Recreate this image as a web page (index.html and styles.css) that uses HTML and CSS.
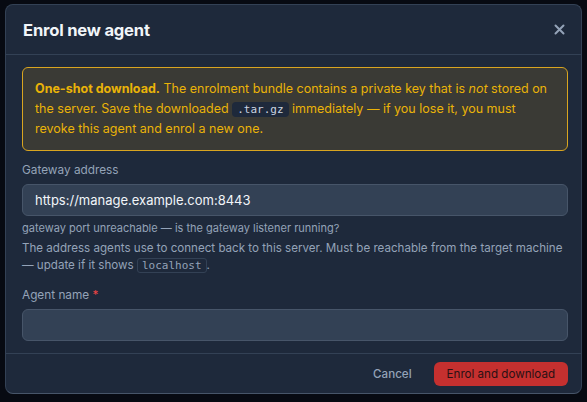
FILE: index.html
```html
<!DOCTYPE html>
<html lang="en">
<head>
<meta charset="utf-8">
<title>Enrol new agent</title>
<link rel="stylesheet" href="styles.css">
</head>
<body>
<div class="modal">
  <div class="modal-header">
    <h2 class="modal-title">Enrol new agent</h2>
    <button class="close-btn" aria-label="Close">
      <svg width="11" height="11" viewBox="0 0 11 11"><path d="M1.5 1.5 L9.5 9.5 M9.5 1.5 L1.5 9.5" stroke="currentColor" stroke-width="2" stroke-linecap="round"/></svg>
    </button>
  </div>
  <div class="modal-body">
    <div class="notice">
      <strong>One-shot download.</strong> The enrolment bundle contains a private key that is <em>not</em> stored on the server. Save the downloaded <code class="code-dark">.tar.gz</code> immediately — if you lose it, you must revoke this agent and enrol a new one.
    </div>
    <div class="field field-gateway">
      <label class="field-label">Gateway address</label>
      <div class="input">https://manage.example.com:8443</div>
      <div class="field-error">gateway port unreachable — is the gateway listener running?</div>
      <div class="field-help">The address agents use to connect back to this server. Must be reachable from the target machine — update if it shows <code class="code-outline">localhost</code>.</div>
    </div>
    <div class="field field-agent">
      <label class="field-label">Agent name <span class="req">*</span></label>
      <div class="input"></div>
    </div>
  </div>
  <div class="modal-footer">
    <button class="btn-cancel">Cancel</button>
    <button class="btn-primary">Enrol and download</button>
  </div>
</div>
</body>
</html>
```
FILE: styles.css
```css
* { box-sizing: border-box; }
html, body { margin: 0; height: 100%; }
body {
  background: #070a12;
  font-family: Inter, "Noto Sans", sans-serif;
  padding: 4px 5px 0 5px;
}
.modal {
  background: #1e293b;
  border: 1px solid #334155;
  border-bottom-color: #475569;
  border-radius: 8px;
  height: 390px;
  display: flex;
  flex-direction: column;
}
.modal-header {
  height: 50px;
  flex: none;
  display: flex;
  align-items: center;
  justify-content: space-between;
  padding: 0 16px 0 17px;
  border-bottom: 1px solid #334155;
}
.modal-title {
  margin: 0;
  font-size: 16.6px;
  font-weight: 700;
  color: #f1f5f9;
  letter-spacing: -0.2px;
}
.close-btn {
  background: none;
  border: 0;
  padding: 0;
  color: #94a3b8;
  display: flex;
}
.modal-body {
  flex: 1;
  padding: 12px 13px 12px 16px;
  display: flex;
  flex-direction: column;
}
.notice {
  border: 1px solid #d9a520;
  background: #3a3a35;
  border-radius: 6px;
  color: #eab308;
  font-size: 12.5px;
  line-height: 19.5px;
  padding: 11px 12px;
}
.notice strong { font-weight: 700; }
.notice em { font-style: italic; }
.code-dark {
  font-family: "DejaVu Sans Mono", monospace;
  font-size: 11px;
  background: #1e293b;
  color: #cbd5e1;
  border-radius: 4px;
  padding: 1px 5px;
}
.field { display: flex; flex-direction: column; }
.field-gateway { margin-top: 11px; }
.field-agent { margin-top: 13px; }
.field-label {
  font-size: 11.8px;
  color: #94a3b8;
  line-height: 16px;
  margin-bottom: 6px;
}
.req { color: #ef4444; }
.input {
  height: 32px;
  background: #334155;
  border: 1px solid #475569;
  border-radius: 6px;
  padding: 0 12px;
  display: flex;
  align-items: center;
  font-size: 13px;
  color: #f1f5f9;
}
.field-error {
  margin-top: 5px;
  font-size: 11px;
  line-height: 14px;
  color: #94a3b8;
}
.field-help {
  margin-top: 5px;
  font-size: 11.6px;
  line-height: 17px;
  color: #94a3b8;
}
.code-outline {
  font-family: "DejaVu Sans Mono", monospace;
  font-size: 11px;
  color: #94a3b8;
  border: 1px solid #334155;
  border-radius: 3px;
  padding: 0 4px;
}
.modal-footer {
  border-top: 1px solid #334155;
  height: 41px;
  flex: none;
  display: flex;
  align-items: center;
  justify-content: flex-end;
  gap: 22px;
  padding: 0 13px;
}
.btn-cancel {
  background: none;
  border: 0;
  font-family: inherit;
  font-size: 11.6px;
  font-weight: 500;
  color: #94a3b8;
  padding: 0;
}
.btn-primary {
  background: #c5302f;
  border: 0;
  border-radius: 6px;
  height: 24px;
  padding: 0 13px;
  font-family: inherit;
  font-size: 11.6px;
  color: #2b1014;
}
```
